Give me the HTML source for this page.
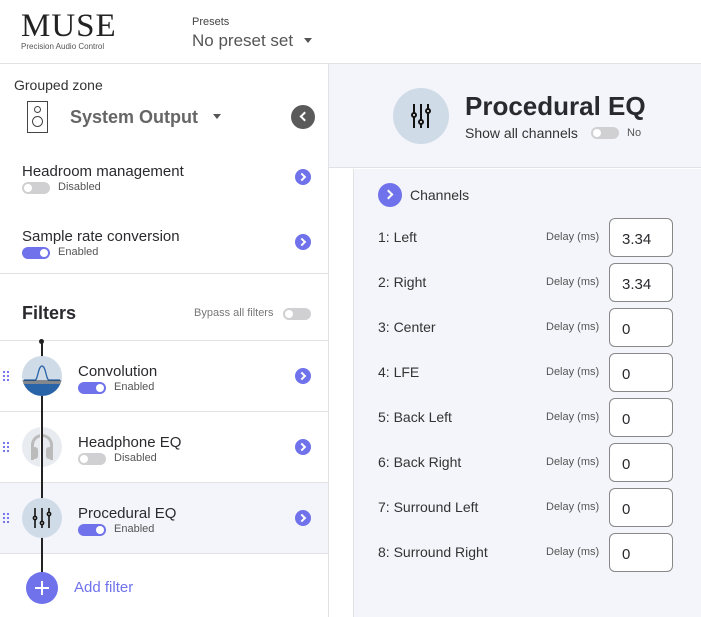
<!DOCTYPE html>
<html><head><style>
*{box-sizing:border-box;margin:0;padding:0}
body{width:701px;height:617px;overflow:hidden;background:#fff;font-family:"Liberation Sans",sans-serif;color:#2a2a2e;position:relative}
.a{position:absolute}
.tog{position:absolute;width:28px;height:12px;border-radius:6px;background:#d0d0d3}
.tog::after{content:"";position:absolute;top:2px;left:2px;width:8px;height:8px;border-radius:50%;background:#fff}
.tog.on{background:#6f72ea}
.tog.on::after{left:18px}
.chev{position:absolute;width:16px;height:16px;border-radius:50%;background:#6f72ea}
.chev::after{content:"";position:absolute;left:4px;top:5px;width:4px;height:4px;border-top:2px solid #fff;border-right:2px solid #fff;transform:rotate(45deg)}
.sm{font-size:11px;color:#555}
.lbl{font-size:15px;color:#2a2a2e}
.drag{position:absolute;left:2px;width:8px;height:12px;background:radial-gradient(circle,#6f72ea 1px,transparent 1.3px) 0 0/4px 4px}
.inp{position:absolute;left:609px;width:64px;height:39px;border:1px solid #888;border-radius:6px;background:#fff;font-size:15px;padding:12px 0 0 12px}
.row{position:absolute;left:378px;font-size:14px;color:#333}
.dl{position:absolute;left:546px;font-size:11px;color:#555}
</style></head><body>
<div class="a" style="left:21px;top:8px;font-family:'Liberation Serif',serif;font-size:33px;letter-spacing:1px;color:#222">MUSE</div>
<div class="a" style="left:21px;top:42px;font-size:8px;color:#555">Precision Audio Control</div>
<div class="a" style="left:192px;top:16px;font-size:11px;color:#444">Presets</div>
<div class="a" style="left:192px;top:31px;font-size:17px;color:#555">No preset set</div>
<div class="a" style="left:304px;top:38px;border:4px solid transparent;border-top:5px solid #555"></div>
<div class="a" style="left:0;top:63px;width:701px;height:1px;background:#e2e2e5"></div>
<div class="a" style="left:328px;top:63px;width:1px;height:554px;background:#e2e2e5"></div>
<div class="a" style="left:329px;top:64px;width:372px;height:104px;background:#f4f5fa;border-bottom:1px solid #e2e2e5"></div>
<div class="a" style="left:353px;top:169px;width:348px;height:448px;background:#f4f5fa;border-left:1px solid #e2e2e5"></div>
<div class="a" style="left:393px;top:88px;width:56px;height:56px;border-radius:50%;background:#cfdbe7"></div>
<svg class="a" style="left:406px;top:102px" width="30" height="28"><g stroke="#111" stroke-width="2" fill="#fff"><line x1="8" y1="2" x2="8" y2="26"/><line x1="15" y1="2" x2="15" y2="26"/><line x1="22" y1="2" x2="22" y2="26"/><circle cx="8" cy="13" r="2"/><circle cx="15" cy="20" r="2"/><circle cx="22" cy="9" r="2"/></g></svg>
<div class="a" style="left:465px;top:91px;font-size:26px;font-weight:bold;color:#2a2a2e">Procedural EQ</div>
<div class="a" style="left:465px;top:125px;font-size:14px;color:#333">Show all channels</div>
<div class="tog" style="left:591px;top:127px"></div>
<div class="a sm" style="left:627px;top:127px">No</div>
<div class="a" style="left:378px;top:183px;width:24px;height:24px;border-radius:50%;background:#6f72ea"></div>
<div class="a" style="left:385px;top:191px;width:7px;height:7px;border-top:2px solid #fff;border-right:2px solid #fff;transform:rotate(45deg)"></div>
<div class="a" style="left:410px;top:187px;font-size:14px;color:#333">Channels</div>
<div class="row" style="top:229px">1: Left</div><div class="dl" style="top:231px">Delay (ms)</div><div class="inp" style="top:218px">3.34</div>
<div class="row" style="top:274px">2: Right</div><div class="dl" style="top:276px">Delay (ms)</div><div class="inp" style="top:263px">3.34</div>
<div class="row" style="top:319px">3: Center</div><div class="dl" style="top:321px">Delay (ms)</div><div class="inp" style="top:308px">0</div>
<div class="row" style="top:364px">4: LFE</div><div class="dl" style="top:366px">Delay (ms)</div><div class="inp" style="top:353px">0</div>
<div class="row" style="top:409px">5: Back Left</div><div class="dl" style="top:411px">Delay (ms)</div><div class="inp" style="top:398px">0</div>
<div class="row" style="top:454px">6: Back Right</div><div class="dl" style="top:456px">Delay (ms)</div><div class="inp" style="top:443px">0</div>
<div class="row" style="top:499px">7: Surround Left</div><div class="dl" style="top:501px">Delay (ms)</div><div class="inp" style="top:488px">0</div>
<div class="row" style="top:544px">8: Surround Right</div><div class="dl" style="top:546px">Delay (ms)</div><div class="inp" style="top:533px">0</div>
<div class="a" style="left:14px;top:77px;font-size:14px;color:#333">Grouped zone</div>
<div class="a" style="left:27px;top:101px;width:21px;height:32px;border:1.5px solid #444"></div>
<div class="a" style="left:34px;top:106px;width:7px;height:7px;border:1.3px solid #444;border-radius:50%"></div>
<div class="a" style="left:32px;top:116px;width:11px;height:11px;border:1.3px solid #444;border-radius:50%"></div>
<div class="a" style="left:70px;top:107px;font-size:18px;font-weight:bold;color:#666">System Output</div>
<div class="a" style="left:213px;top:114px;border:4px solid transparent;border-top:5px solid #555"></div>
<div class="a" style="left:291px;top:105px;width:24px;height:24px;border-radius:50%;background:#5a5a5a"></div>
<div class="a" style="left:301px;top:113px;width:7px;height:7px;border-left:2px solid #fff;border-bottom:2px solid #fff;transform:rotate(45deg)"></div>
<div class="a lbl" style="left:22px;top:163px">Headroom management</div>
<div class="tog" style="left:22px;top:182px"></div><div class="a sm" style="left:58px;top:181px">Disabled</div>
<div class="chev" style="left:295px;top:169px"></div>
<div class="a lbl" style="left:22px;top:228px">Sample rate conversion</div>
<div class="tog on" style="left:22px;top:247px"></div><div class="a sm" style="left:58px;top:246px">Enabled</div>
<div class="chev" style="left:295px;top:234px"></div>
<div class="a" style="left:0;top:273px;width:328px;height:1px;background:#e2e2e5"></div>
<div class="a" style="left:22px;top:303px;font-size:18px;font-weight:bold;color:#2a2a2e">Filters</div>
<div class="a sm" style="left:194px;top:307px;color:#777">Bypass all filters</div>
<div class="tog" style="left:283px;top:308px"></div>
<div class="a" style="left:0;top:340px;width:328px;height:1px;background:#e2e2e5"></div>
<div class="a" style="left:0;top:411px;width:328px;height:1px;background:#e2e2e5"></div>
<div class="a" style="left:0;top:482px;width:328px;height:72px;background:#f4f5fa;border-top:1px solid #e2e2e5;border-bottom:1px solid #e2e2e5"></div>
<div class="a" style="left:41px;top:340px;width:1.5px;height:240px;background:#222"></div>
<div class="a" style="left:39px;top:339px;width:5px;height:5px;border-radius:50%;background:#222"></div>
<svg class="a" style="left:22px;top:356px" width="40" height="40"><defs><clipPath id="c"><circle cx="20" cy="20" r="20"/></clipPath></defs><g clip-path="url(#c)"><rect width="40" height="40" fill="#cfdbe7"/><rect y="28" width="40" height="12" fill="#2a64a8"/><line x1="0" y1="25" x2="40" y2="25" stroke="#333"/><line x1="0" y1="27" x2="40" y2="27" stroke="#333"/><path d="M2 24 H13 C16 24 16 10 20 10 C24 10 24 24 27 24 H38" fill="none" stroke="#2a64a8" stroke-width="1.3"/></g></svg>
<div class="drag" style="left:2px;top:370px"></div>
<div class="a lbl" style="left:78px;top:363px">Convolution</div>
<div class="tog on" style="left:78px;top:382px"></div><div class="a sm" style="left:114px;top:381px">Enabled</div>
<div class="chev" style="left:295px;top:368px"></div>
<div class="a" style="left:22px;top:427px;width:40px;height:40px;border-radius:50%;background:#e8ebf0"></div>
<div class="a" style="left:31px;top:434px;width:22px;height:26px;border:3px solid #bbb;border-bottom:none;border-radius:11px 11px 0 0"></div>
<div class="a" style="left:32px;top:447px;width:6px;height:12px;border-radius:3px;background:#bbb"></div>
<div class="a" style="left:46px;top:447px;width:6px;height:12px;border-radius:3px;background:#bbb"></div>
<div class="a" style="left:40px;top:427px;width:3px;height:40px;background:#fff"></div>
<div class="a" style="left:41px;top:427px;width:1.5px;height:40px;background:#222"></div>
<div class="drag" style="left:2px;top:441px"></div>
<div class="a lbl" style="left:78px;top:434px">Headphone EQ</div>
<div class="tog" style="left:78px;top:453px"></div><div class="a sm" style="left:114px;top:452px">Disabled</div>
<div class="chev" style="left:295px;top:439px"></div>
<div class="a" style="left:22px;top:498px;width:40px;height:40px;border-radius:50%;background:#cfdbe7"></div>
<svg class="a" style="left:30px;top:507px" width="24" height="22"><g stroke="#111" stroke-width="1.6" fill="#fff"><line x1="5" y1="1" x2="5" y2="21"/><line x1="12" y1="1" x2="12" y2="21"/><line x1="19" y1="1" x2="19" y2="21"/><circle cx="5" cy="11" r="1.6"/><circle cx="12" cy="16" r="1.6"/><circle cx="19" cy="7" r="1.6"/></g></svg>
<div class="drag" style="left:2px;top:512px"></div>
<div class="a lbl" style="left:78px;top:505px">Procedural EQ</div>
<div class="tog on" style="left:78px;top:524px"></div><div class="a sm" style="left:114px;top:523px">Enabled</div>
<div class="chev" style="left:295px;top:510px"></div>
<div class="a" style="left:26px;top:572px;width:32px;height:32px;border-radius:50%;background:#6f72ea"></div>
<div class="a" style="left:35px;top:587px;width:14px;height:2px;background:#fff"></div>
<div class="a" style="left:41px;top:581px;width:2px;height:14px;background:#fff"></div>
<div class="a" style="left:74px;top:579px;font-size:15px;color:#6f72ea">Add filter</div>
</body></html>
